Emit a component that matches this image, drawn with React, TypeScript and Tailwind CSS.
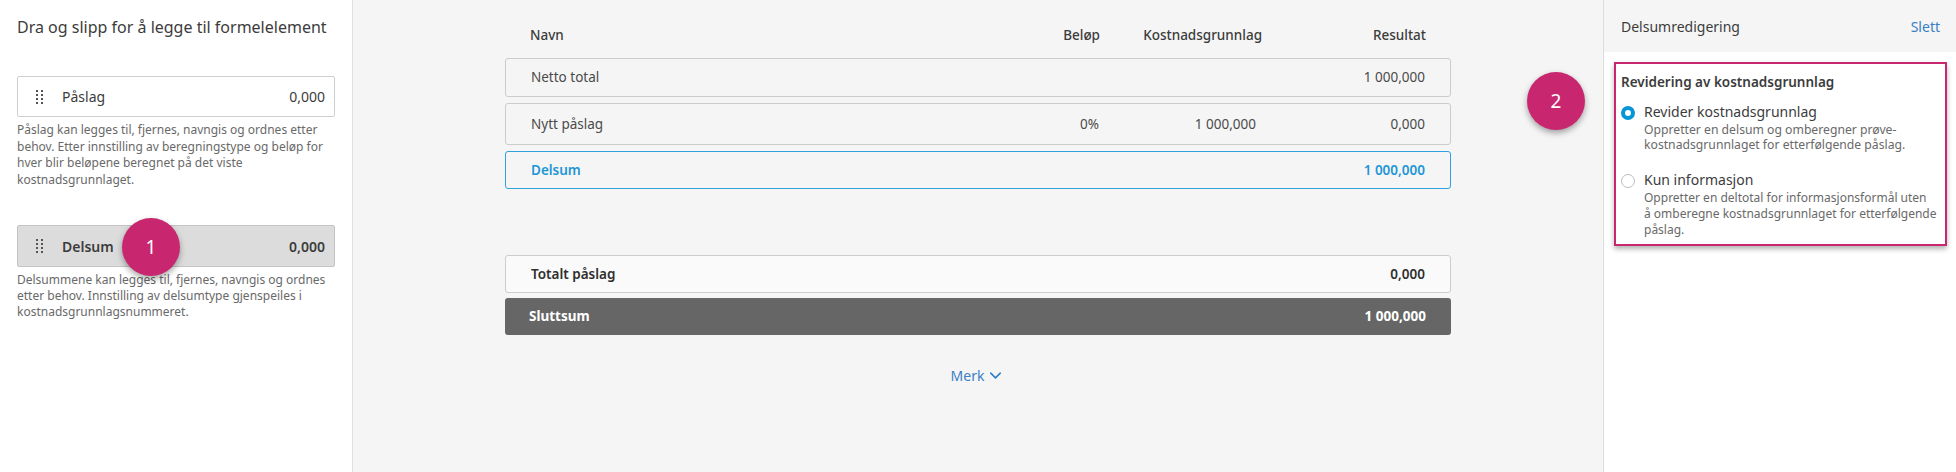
import { ChevronDown } from 'lucide-react';

const font = { fontFamily: '"Noto Sans", "Open Sans", sans-serif' };

const DragHandle = () => (
  <div className="grid grid-cols-2 gap-x-[3px] gap-y-[2px] w-[7px]">
    {Array.from({ length: 8 }).map((_, i) => (
      <span key={i} className="w-[2px] h-[2px] bg-[#555]" />
    ))}
  </div>
);

const Badge: React.FC<{ n: number; className?: string }> = ({ n, className = '' }) => (
  <div
    className={`absolute w-[58px] h-[58px] rounded-full bg-[#c8266f] text-white text-[19px] flex items-center justify-center shadow-[0_3px_6px_rgba(0,0,0,0.35)] ${className}`}
  >
    {n}
  </div>
);

const rowGrid = 'grid grid-cols-[1fr_100px_162px_164px] items-center px-[25px]';

const rows = [
  { name: 'Netto total', belop: '', kost: '', res: '1 000,000', h: 'h-[39px]', kind: 'plain' },
  { name: 'Nytt påslag', belop: '0%', kost: '1 000,000', res: '0,000', h: 'h-[42px]', kind: 'plain' },
  { name: 'Delsum', belop: '', kost: '', res: '1 000,000', h: 'h-[38px]', kind: 'sub' },
];

const LeftPanel = () => (
  <div className="w-[353px] shrink-0 bg-white border-r border-[#e0e0e0] px-[17px] relative">
    <h2 className="text-[16px] text-[#3c3c3c] pt-[15px] leading-[24px]">
      Dra og slipp for å legge til formelelement
    </h2>
    <div className="mt-[37px] h-[41px] border border-[#cfcfcf] rounded-[2px] bg-white flex items-center pl-[18px] pr-[9px]">
      <DragHandle />
      <span className="ml-[19px] text-[14px] text-[#3c3c3c]">Påslag</span>
      <span className="ml-auto text-[14px] text-[#3c3c3c]">0,000</span>
    </div>
    <p className="mt-[5px] text-[12px] leading-[16.5px] text-[#696969] pr-[8px]">
      Påslag kan legges til, fjernes, navngis og ordnes etter behov. Etter innstilling av beregningstype og beløp for hver
      blir beløpene beregnet på det viste kostnadsgrunnlaget.
    </p>
    <div className="relative mt-[37px] h-[42px] border border-[#c4c4c4] rounded-[2px] bg-[#dcdcdc] flex items-center pl-[18px] pr-[9px]">
      <DragHandle />
      <span className="ml-[19px] text-[14px] font-semibold text-[#3c3c3c]">Delsum</span>
      <span className="ml-auto text-[14px] font-semibold text-[#3c3c3c]">0,000</span>
      <Badge n={1} className="left-[104px] top-[-8px]" />
    </div>
    <p className="mt-[5px] text-[12px] leading-[16px] text-[#696969] pr-[8px]">
      Delsummene kan legges til, fjernes, navngis og ordnes etter behov. Innstilling av delsumtype gjenspeiles i
      kostnadsgrunnlagsnummeret.
    </p>
  </div>
);

const CenterPanel = () => (
  <div className="flex-1 bg-[#f5f5f5] relative">
    <div className="w-[946px] mx-auto">
      <div className={`${rowGrid} h-[58px] pt-[12px] text-[13.5px] font-medium text-[#3c3c3c]`}>
        <span>Navn</span>
        <span className="text-right">Beløp</span>
        <span className="text-right">Kostnadsgrunnlag</span>
        <span className="text-right">Resultat</span>
      </div>
      <div className="flex flex-col gap-[6px]">
        {rows.map((r) => (
          <div
            key={r.name}
            className={`${rowGrid} ${r.h} rounded-[3px] border text-[13.5px] ${
              r.kind === 'sub'
                ? 'border-[#2fa2dd] text-[#1f96d6] font-semibold'
                : 'border-[#cccccc] text-[#4a4a4a]'
            }`}
          >
            <span>{r.name}</span>
            <span className="text-right">{r.belop}</span>
            <span className="text-right pr-[5px]">{r.kost}</span>
            <span className="text-right">{r.res}</span>
          </div>
        ))}
      </div>
      <div className="mt-[66px] flex flex-col gap-[5px]">
        <div className={`${rowGrid} h-[38px] rounded-[3px] border border-[#cccccc] bg-[#fafafa] text-[13.5px] font-semibold text-[#2f2f2f]`}>
          <span>Totalt påslag</span>
          <span />
          <span />
          <span className="text-right">0,000</span>
        </div>
        <div className={`${rowGrid} h-[37px] rounded-[3px] bg-[#666666] text-[13.5px] font-bold text-white`}>
          <span className="-ml-[1px]">Sluttsum</span>
          <span />
          <span />
          <span className="text-right">1 000,000</span>
        </div>
      </div>
      <div className="mt-[30px] flex justify-center items-center gap-[2px] text-[#3b7fc4] text-[14px]">
        <span>Merk</span>
        <ChevronDown size={19} strokeWidth={2} className="text-[#2f7fc8]" />
      </div>
    </div>
    <Badge n={2} className="right-[18px] top-[72px]" />
  </div>
);

const Radio: React.FC<{ checked: boolean }> = ({ checked }) =>
  checked ? (
    <span className="mt-[4px] w-[14px] h-[14px] rounded-full border-[4px] border-[#0696d7] bg-white shrink-0" />
  ) : (
    <span className="mt-[4px] w-[14px] h-[14px] rounded-full border border-[#bdbdbd] bg-white shrink-0" />
  );

const RightPanel = () => (
  <div className="w-[353px] shrink-0 bg-white border-l border-[#dcdcdc]">
    <div className="h-[52px] bg-[#f5f5f5] flex items-center justify-between pl-[17px] pr-[16px] text-[14px]">
      <span className="text-[#3c3c3c]">Delsumredigering</span>
      <span className="text-[#3b7fc4]">Slett</span>
    </div>
    <div className="ml-[10px] mr-[9px] mt-[10px] border-2 border-[#c8266f] px-[5px] pt-[8px] pb-[6px] shadow-[0_3px_5px_rgba(0,0,0,0.3)]">
      <h3 className="text-[13.5px] font-semibold text-[#3c3c3c] leading-[20px]">Revidering av kostnadsgrunnlag</h3>
      <div className="mt-[10px] flex gap-[9px]">
        <Radio checked />
        <div>
          <div className="text-[14px] text-[#3c3c3c] leading-[20px]">Revider kostnadsgrunnlag</div>
          <p className="text-[12.2px] text-[#696969] leading-[15px]">
            Oppretter en delsum og omberegner prøve-kostnadsgrunnlaget for etterfølgende påslag.
          </p>
        </div>
      </div>
      <div className="mt-[18px] flex gap-[9px]">
        <Radio checked={false} />
        <div>
          <div className="text-[14px] text-[#3c3c3c] leading-[20px]">Kun informasjon</div>
          <p className="text-[12px] text-[#696969] leading-[16px]">
            Oppretter en deltotal for informasjonsformål uten
            <br />å omberegne kostnadsgrunnlaget for etterfølgende påslag.
          </p>
        </div>
      </div>
    </div>
  </div>
);

export default function App() {
  return (
    <div className="flex h-[472px] w-[1956px] overflow-hidden" style={font}>
      <LeftPanel />
      <CenterPanel />
      <RightPanel />
    </div>
  );
}
